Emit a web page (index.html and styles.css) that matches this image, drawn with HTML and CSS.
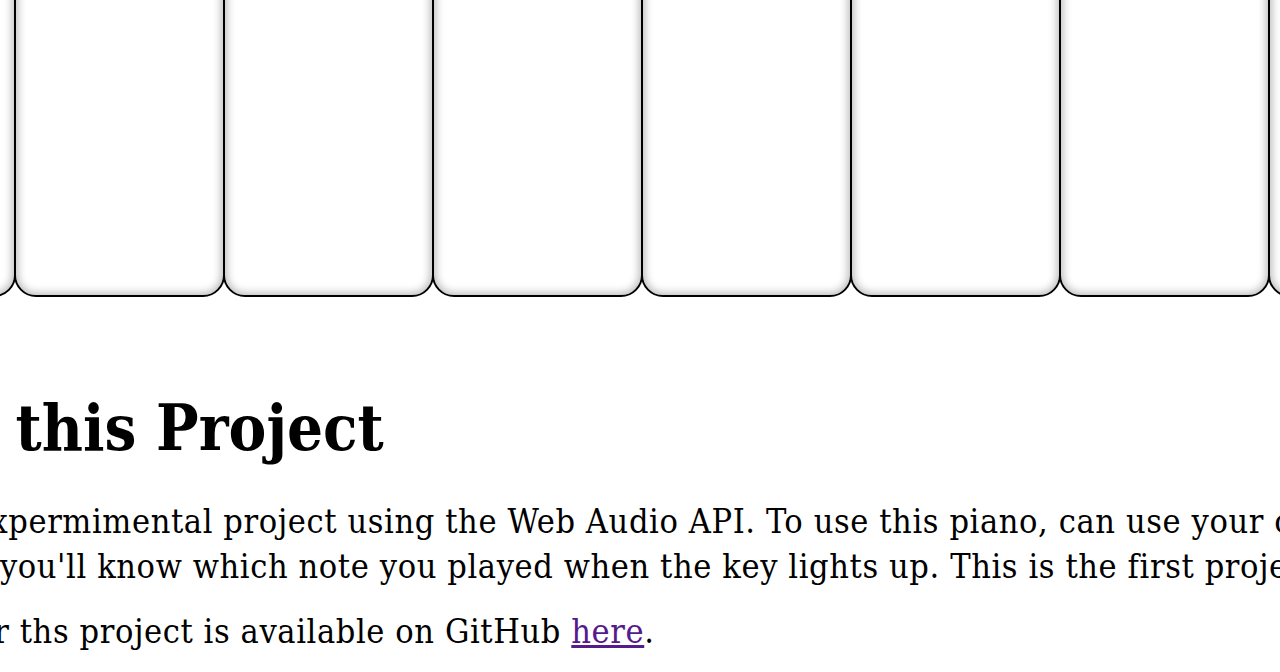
FILE: index.html
```html
<!DOCTYPE html>
<html lang="en">
<head>
<meta charset="utf-8">
<title>Web Audio Piano</title>
<link rel="stylesheet" href="styles.css">
</head>
<body>
<div class="page">
  <div class="keyboard">
    <div class="key"></div>
    <div class="key"></div>
    <div class="key"></div>
    <div class="key"></div>
    <div class="key"></div>
    <div class="key"></div>
    <div class="key"></div>
    <div class="key"></div>
  </div>
  <section class="about">
    <h1 class="about-title">About this Project</h1>
    <p class="about-text">This is an expermimental project using the Web Audio API. To use this piano, can use your computer keyboard or click<br>his key and you'll know which note you played when the key lights up. This is the first project</p>
    <p class="about-text">The code for ths project is available on GitHub <a class="link" href="#">here</a>.</p>
  </section>
</div>
</body>
</html>
```

FILE: styles.css
```css
html, body {
  margin: 0;
  padding: 0;
  background: #fff;
  overflow: hidden;
}

.page {
  width: 1280px;
  height: 672px;
  overflow: hidden;
}

.keyboard {
  display: flex;
  height: 297px;
  margin-left: -195px;
}

.key {
  flex: 0 0 211px;
  box-sizing: border-box;
  height: 317px;
  margin-top: -20px;
  margin-right: -2px;
  background: #fff;
  border: 2px solid #000;
  border-radius: 0 0 22px 22px;
  box-shadow: inset 0 0 9px 2px rgba(0, 0, 0, 0.28);
}

.about {
  margin-left: -193px;
  color: #000;
  font-family: "DejaVu Serif Condensed", "DejaVu Serif", serif;
  white-space: nowrap;
}

.about-title {
  margin: 93px 0 0;
  font-size: 63px;
  line-height: 76px;
  font-weight: bold;
}

.about-text {
  margin: 33px 0 0;
  font-size: 34px;
  line-height: 45px;
  letter-spacing: 0.6px;
}

.about-text + .about-text {
  margin-top: 20px;
}

.link {
  color: #551a8b;
  text-decoration: underline;
}
```
